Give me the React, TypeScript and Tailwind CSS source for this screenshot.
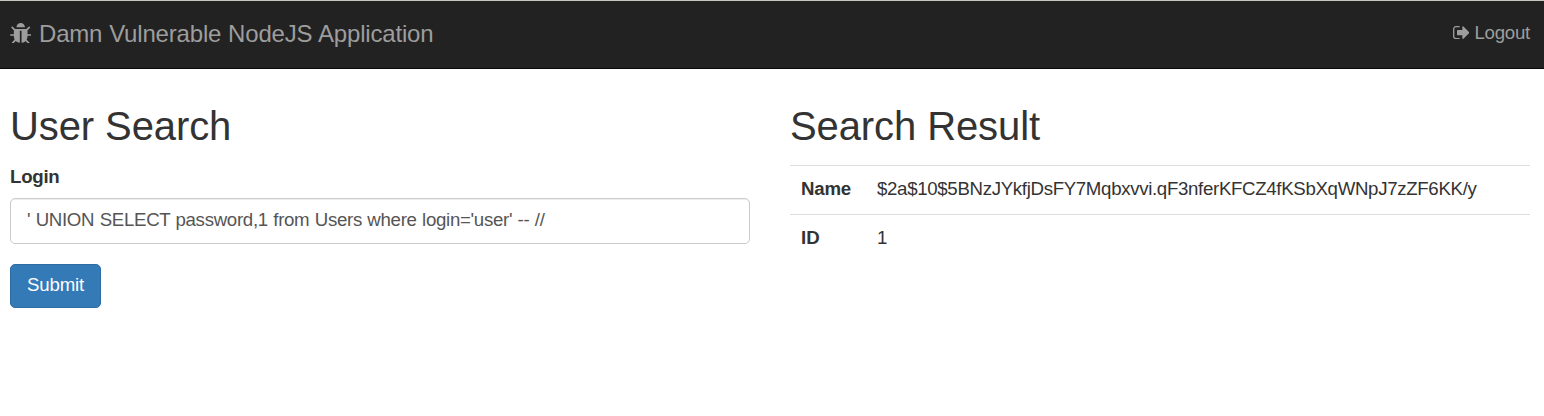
function BugIcon() {
  return (
    <svg viewBox="32 64 1600 1536" className="mr-[0.600px] mb-[2px] h-[20.600px] w-[21.400px]" fill="currentColor">
      <path d="M1632 960q0 26-19 45t-45 19h-224q0 171-67 290l208 209q19 19 19 45t-19 45q-18 19-45 19t-45-19l-198-197q-5 5-15 13t-42 28.500-65 36.500-82 29-97 13v-896h-128v896q-51 0-101.500-13.500t-87-33-66-39-43.500-32.500l-15-14-183 207q-20 21-48 21-24 0-43-16-19-18-20.500-44.500t15.500-46.500l202-227q-58-114-58-274h-224q-26 0-45-19t-19-45 19-45 45-19h224v-294l-173-173q-19-19-19-45t19-45 45-19 45 19l173 173h844l173-173q19-19 45-19t45 19 19 45-19 45l-173 173v294h224q26 0 45 19t19 45zm-480-576h-640q0-133 93.500-226.500t226.500-93.500 226.500 93.500 93.500 226.500z" />
    </svg>
  );
}

function LogoutIcon() {
  return (
    <svg viewBox="64 256 1568 1280" className="mb-px h-[13.330px] w-[16.330px]" fill="currentColor">
      <path d="M704 1440q0 4 1 20t.5 26.500-3 23.500-10 19.500-20.500 6.500h-320q-119 0-203.500-84.500t-84.500-203.500v-704q0-119 84.500-203.500t203.500-84.500h320q13 0 22.500 9.500t9.500 22.500q0 4 1 20t.5 26.500-3 23.500-10 19.500-20.500 6.500h-320q-66 0-113 47t-47 113v704q0 66 47 113t113 47h312l11.500 1 11.500 3 8 5.500 7 9 2 13.500zm928-544q0 26-19 45l-544 544q-19 19-45 19t-45-19-19-45v-288h-448q-26 0-45-19t-19-45v-384q0-26 19-45t45-19h448v-288q0-26 19-45t45-19 45 19l544 544q19 19 19 45z" />
    </svg>
  );
}

export default function App() {
  return (
    <div className="h-[416px] overflow-hidden bg-white font-['Liberation_Sans',Arial,sans-serif] text-[18.670px] leading-[26px] text-[#333333]">
      <nav className="flex h-[69px] items-start justify-between border-y border-t-[#c5c8c0] border-b-[#080808] bg-[#222222] pr-3.5 pl-2.5 text-[#9d9d9d]">
        <a href="#" className="flex items-center gap-[7px] pt-5 text-[24px] tracking-[-0.180px] [word-spacing:0.400px]"><BugIcon />Damn Vulnerable NodeJS Application</a>
        <a href="#" className="flex items-center gap-[5px] pt-[19px] tracking-[-0.250px]"><LogoutIcon />Logout</a>
      </nav>
      <main className="grid grid-cols-[740px_740px] gap-10 px-2.5 pt-[34px]">
        <section>
          <h1 className="text-[40px] leading-[46px] tracking-[-0.100px]">User Search</h1>
          <form className="mt-[15px]" onSubmit={(e) => e.preventDefault()}>
            <label htmlFor="login" className="block font-bold tracking-[-0.250px]">Login</label>
            <input id="login" defaultValue="' UNION SELECT password,1 from Users where login='user' -- //" className="mt-2 block h-[46px] w-full rounded-[5px] border border-[#cccccc] px-4 pb-0.5 tracking-[-0.300px] [word-spacing:0.500px] text-[#555555] shadow-[inset_0_1px_1px_rgba(0,0,0,0.075)] outline-none" />
            <button className="mt-5 h-11 w-[91px] rounded-[5px] border border-[#2e6da4] bg-[#337ab7] pb-0.5 tracking-[-0.150px] text-white">Submit</button>
          </form>
        </section>
        <section>
          <h1 className="text-[40px] leading-[46px] tracking-[-0.100px]">Search Result</h1>
          <table className="mt-4 w-full text-left">
            <tbody>
              <tr className="h-[49px] border-t border-[#dddddd]"><th className="w-[76px] pb-0.5 pl-[11px] tracking-[-0.200px]">Name</th><td className="pb-0.5 pl-[11px] tracking-[-0.325px]">$2a$10$5BNzJYkfjDsFY7Mqbxvvi.qF3nferKFCZ4fKSbXqWNpJ7zZF6KK/y</td></tr>
              <tr className="h-[49px] border-t border-[#dddddd]"><th className="pb-0.5 pl-[11px]">ID</th><td className="pb-0.5 pl-[11px]">1</td></tr>
            </tbody>
          </table>
        </section>
      </main>
    </div>
  );
}
